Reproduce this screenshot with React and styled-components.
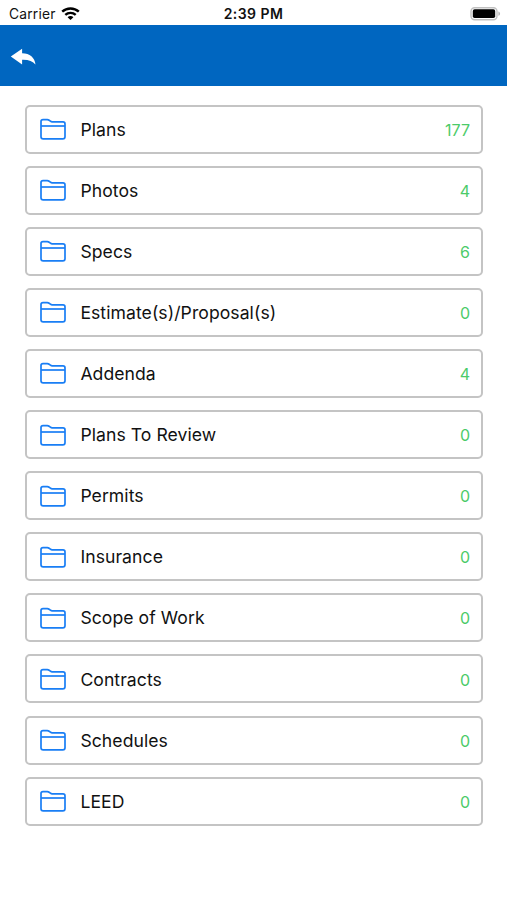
import React from "react"
import styled, { createGlobalStyle } from 'styled-components'

const folders = [
  { name: 'Plans', count: 177 },
  { name: 'Photos', count: 4 },
  { name: 'Specs', count: 6 },
  { name: 'Estimate(s)/Proposal(s)', count: 0 },
  { name: 'Addenda', count: 4 },
  { name: 'Plans To Review', count: 0 },
  { name: 'Permits', count: 0 },
  { name: 'Insurance', count: 0 },
  { name: 'Scope of Work', count: 0 },
  { name: 'Contracts', count: 0 },
  { name: 'Schedules', count: 0 },
  { name: 'LEED', count: 0 },
]

const GlobalStyle = createGlobalStyle`
  * {
    box-sizing: border-box;
  }

  body {
    margin: 0;
    background: #fff;
    font-family: Inter, 'Liberation Sans', sans-serif;
  }
`

const Screen = styled.div`
  display: flex;
  flex-direction: column;
  width: 100%;
  height: 100vh;
  overflow: hidden;
`

const StatusBar = styled.header`
  display: grid;
  grid-template-columns: 1fr auto 1fr;
  align-items: center;
  flex: none;
  height: 25.4px;
  padding: 2px 6px 0 9px;
  color: #111;
`

const Carrier = styled.div`
  display: flex;
  align-items: center;
  gap: 5px;
  font-size: 13.8px;
  letter-spacing: 0.2px;
`

const Clock = styled.div`
  margin-right: 3px;
  font-size: 14px;
  font-weight: 600;
  letter-spacing: 0.45px;
`

const Battery = styled.div`
  display: flex;
  justify-content: flex-end;
`

const NavBar = styled.nav`
  display: flex;
  align-items: center;
  flex: none;
  height: 60.6px;
  padding: 2px 0 0 10px;
  background: #0066c0;
`

const BackButton = styled.button`
  display: flex;
  padding: 0;
  border: 0 none;
  background: none;
  color: #fff;
`

const FolderList = styled.ul`
  display: flex;
  flex-direction: column;
  gap: 12.1px;
  margin: 0;
  padding: 18.6px 24.5px 0 25px;
  list-style: none;
`

const FolderRow = styled.li`
  display: flex;
  align-items: center;
  height: 49px;
  padding: 0 10.5px 0 12.5px;
  border: 2px solid #c4c4c4;
  border-radius: 5px;

  svg {
    flex: none;
  }
`

const FolderName = styled.span`
  flex: 1;
  margin-left: 14.9px;
  padding-top: 1.2px;
  color: #111;
  font-size: 17.6px;
  letter-spacing: 0.06px;
  line-height: 22px;
`

const Count = styled.span`
  padding-top: 1.2px;
  color: #4ccb69;
  font-size: 16px;
  line-height: 20px;
`

const WifiIcon = () => (
  <svg width='19' height='14' viewBox='0 0 19 14' fill='none' stroke='#000' strokeWidth='2.4'>
    <path d='M1.2 4.7C5.8.4 13.2.4 17.8 4.7' />
    <path d='M4.3 7.9c2.9-2.7 7.5-2.7 10.4 0' />
    <path d='M9.5 13.1 6.6 10.2c1.6-1.5 4.2-1.5 5.8 0Z' fill='#000' stroke='none' />
  </svg>
)

const BatteryIcon = () => (
  <svg width='31' height='14' viewBox='0 0 31 14'>
    <rect x='1' y='.7' width='26' height='12' rx='3.6' fill='#fff' stroke='#c0c0c0' strokeWidth='1.4' />
    <rect x='2.8' y='2.3' width='22.4' height='8.8' rx='1.8' fill='#000' />
    <path d='M28.4 4.4c2.2.7 2.2 3.7 0 4.4Z' fill='#b5b5b5' />
  </svg>
)

const BackIcon = () => (
  <svg width='26' height='18' viewBox='0 0 26 18' fill='currentColor'>
    <path d='M.8 8.6 12.1.8v4.5c7.8.1 12.6 4.3 13.4 11.2-2.8-3.6-7-5-13.4-4.8v4.7Z' />
  </svg>
)

const FolderIcon = () => (
  <svg width='26' height='22' viewBox='0 0 26 22' fill='none' stroke='#197ef5' strokeWidth='1.7' strokeLinejoin='round'>
    <path d='M1 18.7V3.6Q1 1.6 3 1.6h4.3q1 0 1.8.6l1.3 1q.8.7 1.8.7H23q2 0 2 2v12.8q0 2.2-2.2 2.2H3.2Q1 20.9 1 18.7Z' />
    <path d='M1 8h24' />
  </svg>
)

const App = () => (
  <Screen>
    <GlobalStyle />
    <StatusBar>
      <Carrier>
        Carrier
        <WifiIcon />
      </Carrier>
      <Clock>2:39 PM</Clock>
      <Battery>
        <BatteryIcon />
      </Battery>
    </StatusBar>
    <NavBar>
      <BackButton aria-label='Back'>
        <BackIcon />
      </BackButton>
    </NavBar>
    <FolderList>
      {folders.map(folder => (
        <FolderRow key={folder.name}>
          <FolderIcon />
          <FolderName>{folder.name}</FolderName>
          <Count>{folder.count}</Count>
        </FolderRow>
      ))}
    </FolderList>
  </Screen>
)

export default App
